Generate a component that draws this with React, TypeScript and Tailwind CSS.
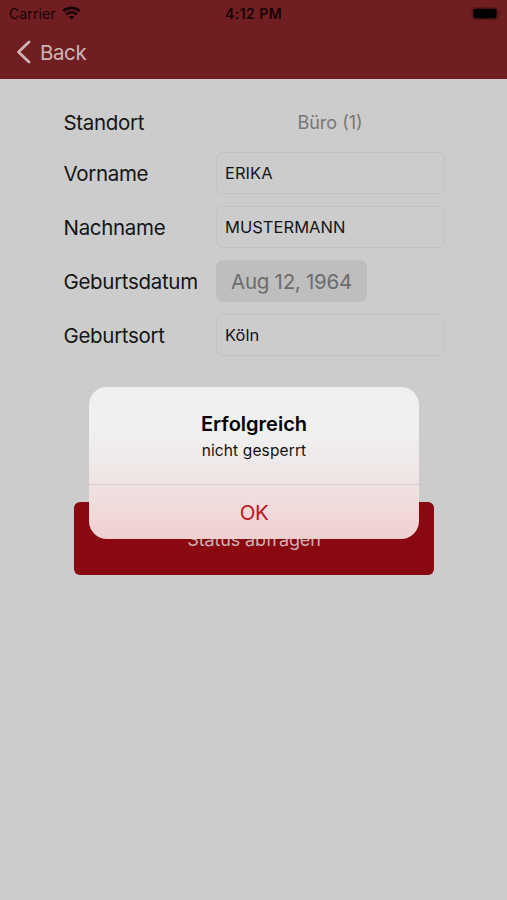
import React from 'react';

interface FieldProps {
  label: string;
  children: React.ReactNode;
}

const Field: React.FC<FieldProps> = ({ label, children }) => (
  <div className="flex h-[42px] items-center">
    <label className="w-[152.5px] shrink-0 pt-[2px] text-[20.5px] tracking-[-0.32px] text-[#151515]">{label}</label>
    {children}
  </div>
);

const TextField: React.FC<{ value: string }> = ({ value }) => (
  <div className="flex h-[42px] w-[229px] items-center rounded-[7px] border border-[#c2c2c2] px-2 text-[16.5px] tracking-[0.03px] text-[#151515]">
    {value}
  </div>
);

const StatusBar = () => (
  <div className="flex h-[27px] items-center justify-between pr-[5px] pl-[9px] text-[14px] text-[#180305]">
    <div className="flex w-[98px] items-center gap-[6px]">
      <span className="tracking-[0.1px]">Carrier</span>
      <svg width="19" height="14" viewBox="0 0 19 14" fill="none" className="-mt-px">
        <path d="M1.3 5.2C5.8.8 13.2.8 17.7 5.2" stroke="currentColor" strokeWidth="2.8" />
        <path d="M4.2 8.3C7.1 5.5 11.9 5.5 14.8 8.3" stroke="currentColor" strokeWidth="2.4" />
        <path d="M6.8 10.7C8.3 9.3 10.7 9.3 12.2 10.7L9.5 13.5Z" fill="currentColor" />
      </svg>
    </div>
    <span className="font-semibold tracking-[0.45px]">4:12 PM</span>
    <div className="flex w-[102px] justify-end">
      <svg width="31" height="16" viewBox="0 0 31 16">
        <rect x="0.6" y="0.9" width="26.8" height="13.2" rx="4" fill="#591619" />
        <rect x="2.5" y="2.8" width="23" height="9.4" rx="2.2" fill="#000" />
        <path d="M28.6 5.3c2 .8 2 3.6 0 4.4z" fill="#591619" />
      </svg>
    </div>
  </div>
);

const Alert = () => (
  <div className="absolute top-[387px] left-[89px] flex h-[152px] w-[330px] flex-col overflow-hidden rounded-[18px] bg-linear-to-b from-[#f0f0f0] from-30% via-[#f0e4e4] via-62% to-[#f1cfd0] text-center">
    <div className="h-[97px] pt-[24px]">
      <h2 className="text-[20px] leading-[27px] font-semibold tracking-[0px] text-black">Erfolgreich</h2>
      <p className="text-[15.5px] leading-[25px] tracking-[0.13px] text-[#111]">nicht gesperrt</p>
    </div>
    <button type="button" className="flex-1 border-t border-[#d6caca] pt-[2px] text-[20.5px] tracking-[-0.4px] text-[#c1121f]">
      OK
    </button>
  </div>
);

export default function App() {
  return (
    <div className="relative h-[900px] w-[507px] overflow-hidden bg-[#cccccc] font-['Inter','Liberation_Sans',sans-serif]">
      <header className="h-[79px] bg-[#701e21]">
        <StatusBar />
        <button type="button" className="flex h-[50px] items-center gap-[9px] pl-[16px] text-[20.5px] tracking-[-0.4px] text-[#ccb5b6]">
          <svg width="15" height="24" viewBox="0 0 15 24" fill="none">
            <path d="M13 2L2.5 12L13 22" stroke="currentColor" strokeWidth="2.7" strokeLinecap="round" strokeLinejoin="round" />
          </svg>
          <span className="pt-[2px]">Back</span>
        </button>
      </header>

      <main className="pt-[22px]">
        <div className="flex flex-col gap-3 pl-[63.5px]">
          <div className="-mb-[3px]">
            <Field label="Standort">
              <span className="w-[228px] text-center text-[18px] text-[#777]">Büro (1)</span>
            </Field>
          </div>
          <Field label="Vorname">
            <TextField value="ERIKA" />
          </Field>
          <Field label="Nachname">
            <TextField value="MUSTERMANN" />
          </Field>
          <Field label="Geburtsdatum">
            <div className="flex h-[42px] w-[151px] items-center justify-center rounded-[7px] bg-[#bebebe] pt-[2px] text-[20.5px] tracking-[-0.27px] text-[#6c6c6c]">
              Aug 12, 1964
            </div>
          </Field>
          <Field label="Geburtsort">
            <TextField value="Köln" />
          </Field>
        </div>

        <button type="button" className="mt-[146px] ml-[74px] block h-[73px] w-[360px] rounded-[6px] bg-[#8a0911] pt-[2px] text-[18px] tracking-[-0.15px] text-[#ceb0b2]">
          Status abfragen
        </button>
      </main>

      <Alert />
    </div>
  );
}
